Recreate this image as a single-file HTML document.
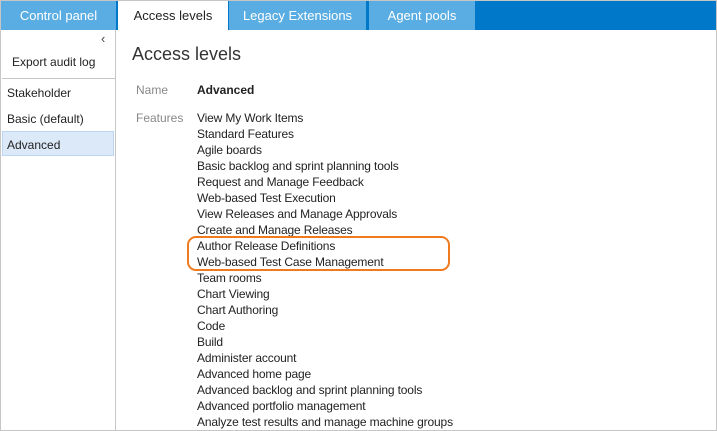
<!DOCTYPE html>
<html><head><meta charset="utf-8"><style>
*{margin:0;padding:0;box-sizing:border-box}
body{width:717px;height:431px;overflow:hidden;background:#fff;font-family:"Liberation Sans",sans-serif;font-size:12px;color:#222;position:relative}
.frame{position:absolute;left:0;top:0;width:717px;height:431px;border:1px solid #c6c6c6}
.bar{position:absolute;left:1px;top:1px;width:715px;height:29px;background:#0078c9}
.tab{position:absolute;top:1px;height:29px;background:#5aade2;color:#fff;font-size:13px;line-height:30px;text-align:center}
.tab.act{background:#fff;color:#222}
.left{position:absolute;left:1px;top:30px;width:115px;height:400px;border-right:1px solid #c6c6c6}
.abs{position:absolute;white-space:nowrap}
.sel{position:absolute;left:2px;top:131px;width:112px;height:25px;background:#dce9f8;border:1px solid #bcd5f0}
.list{position:absolute;left:197px;top:110px;line-height:16px;letter-spacing:-0.15px}
.box{position:absolute;left:187px;top:236px;width:263px;height:35px;border:2.5px solid #f07a1e;border-radius:9px}
</style></head><body>
<div class="bar"></div>
<div class="tab" style="left:1px;width:115px">Control panel</div>
<div class="tab act" style="left:118px;width:110px">Access levels</div>
<div class="tab" style="left:229px;width:137px">Legacy Extensions</div>
<div class="tab" style="left:369px;width:106px">Agent pools</div>
<div class="left"></div>
<div class="abs" style="left:101px;top:31px;font-size:13px;color:#444">&#8249;</div>
<div class="abs" style="left:12px;top:55px">Export audit log</div>
<div class="abs" style="left:2px;top:78px;width:113px;border-top:1px solid #c6c6c6"></div>
<div class="abs" style="left:7px;top:86px">Stakeholder</div>
<div class="abs" style="left:7px;top:112px">Basic (default)</div>
<div class="sel"></div>
<div class="abs" style="left:7px;top:138px">Advanced</div>
<div class="abs" style="left:132px;top:44px;font-size:18px;color:#333">Access levels</div>
<div class="abs" style="left:136px;top:83px;color:#888">Name</div>
<div class="abs" style="left:197px;top:83px;font-weight:bold">Advanced</div>
<div class="abs" style="left:136px;top:111px;color:#888">Features</div>
<div class="abs list">View My Work Items<br>Standard Features<br>Agile boards<br>Basic backlog and sprint planning tools<br>Request and Manage Feedback<br>Web-based Test Execution<br>View Releases and Manage Approvals<br>Create and Manage Releases<br>Author Release Definitions<br>Web-based Test Case Management<br>Team rooms<br>Chart Viewing<br>Chart Authoring<br>Code<br>Build<br>Administer account<br>Advanced home page<br>Advanced backlog and sprint planning tools<br>Advanced portfolio management<br>Analyze test results and manage machine groups</div>
<div class="box"></div>
<div class="frame"></div>
</body></html>
